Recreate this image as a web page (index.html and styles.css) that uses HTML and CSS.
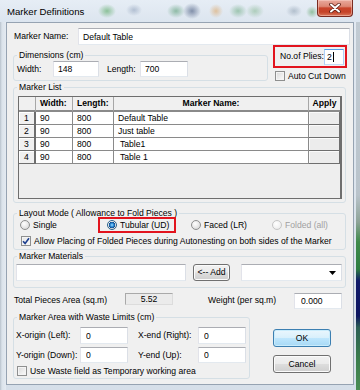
FILE: index.html
```html
<!DOCTYPE html>
<html>
<head>
<meta charset="utf-8">
<link rel="stylesheet" href="styles.css">
</head>
<body>
<div class="window">
  <div class="titlebar">
    <span class="title">Marker Definitions</span>
    <div class="close">
      <svg width="14" height="10" viewBox="0 0 14 10"><path d="M3 1.5 L11 8.5 M11 1.5 L3 8.5" stroke="#5a1d14" stroke-width="3.6" stroke-linecap="round"/><path d="M3 1.5 L11 8.5 M11 1.5 L3 8.5" stroke="#ffffff" stroke-width="2" stroke-linecap="round"/></svg>
    </div>
  </div>
  <div class="client">
    <div class="row-name">
      <span class="lbl-name">Marker Name:</span>
      <input class="tb tb-name" type="text" value="Default Table">
    </div>

    <div class="row-dim">
      <fieldset class="gb gb-dim">
        <legend>Dimensions (cm)</legend>
        <div class="dim-inner">
          <span class="lbl-w">Width:</span>
          <input class="tb tb-w" type="text" value="148">
          <span class="lbl-l">Length:</span>
          <input class="tb tb-l" type="text" value="700">
        </div>
      </fieldset>
      <div class="plies-col">
        <div class="plies">
          <span class="lbl-plies">No.of Plies:</span>
          <div class="tb tb-plies focus">2<span class="caret"></span></div>
        </div>
        <div class="chk-row acd">
          <span class="chk"></span><span>Auto Cut Down</span>
        </div>
      </div>
    </div>

    <fieldset class="gb gb-list">
      <legend>Marker List</legend>
      <div class="list-inner">
        <div class="grid">
          <table>
            <colgroup><col class="c0"><col class="c1"><col class="c2"><col class="c3"><col class="c4"></colgroup>
            <tr class="hdr"><th class="corner"></th><th class="l">Width:</th><th class="l">Length:</th><th>Marker Name:</th><th>Apply</th></tr>
            <tr><th class="rh">1</th><td>90</td><td>800</td><td>Default Table</td><td class="ap"></td></tr>
            <tr><th class="rh">2</th><td>90</td><td>800</td><td>Just table</td><td class="ap"></td></tr>
            <tr><th class="rh">3</th><td>90</td><td>800</td><td class="ind">Table1</td><td class="ap"></td></tr>
            <tr><th class="rh">4</th><td>90</td><td>800</td><td class="ind">Table 1</td><td class="ap"></td></tr>
          </table>
        </div>
      </div>
    </fieldset>

    <fieldset class="gb gb-layout">
      <legend>Layout Mode ( Allowance to Fold Pieces )</legend>
      <div class="layout-inner">
        <div class="radio-row">
          <span class="opt opt-single"><span class="radio"></span><span>Single</span></span>
          <span class="opt opt-tub hl"><span class="radio on"></span><span>Tubular (UD)</span></span>
          <span class="opt opt-faced"><span class="radio"></span><span>Faced (LR)</span></span>
          <span class="opt opt-fold dis"><span class="radio"></span><span>Folded (all)</span></span>
        </div>
        <div class="chk-row allow">
          <span class="chk on"><svg width="8" height="8" viewBox="0 0 8 8"><path d="M1 4.2 L3.1 6.4 L7 1.2" fill="none" stroke="#1d3f8f" stroke-width="1.6"/></svg></span>
          <span>Allow Placing of Folded Pieces during Autonesting on both sides of the Marker</span>
        </div>
      </div>
    </fieldset>

    <fieldset class="gb gb-mat">
      <legend>Marker Materials</legend>
      <div class="mat-inner">
        <input class="tb tb-mat" type="text" value="">
        <div class="btn btn-add">&lt;-- Add</div>
        <div class="tb combo"><svg width="7" height="4" viewBox="0 0 7 4"><path d="M0 0 H7 L3.5 4 Z" fill="#000"/></svg></div>
      </div>
    </fieldset>

    <div class="row-total">
      <span class="lbl-total">Total Pieces Area (sq.m)</span>
      <div class="valbox">5.52</div>
      <span class="lbl-weight">Weight (per sq.m)</span>
      <input class="tb tb-weight" type="text" value="0.000">
    </div>

    <div class="row-bottom">
      <fieldset class="gb gb-area">
        <legend>Marker Area with Waste Limits (cm)</legend>
        <div class="area-inner">
          <div class="area-row r1">
            <span class="lbl-a">X-origin (Left):</span>
            <input class="tb tb-a" type="text" value="0">
            <span class="lbl-b">X-end (Right):</span>
            <input class="tb tb-a" type="text" value="0">
          </div>
          <div class="area-row r2">
            <span class="lbl-a">Y-origin (Down):</span>
            <input class="tb tb-a" type="text" value="0">
            <span class="lbl-b">Y-end (Up):</span>
            <input class="tb tb-a" type="text" value="0">
          </div>
          <div class="chk-row waste">
            <span class="chk"></span><span>Use Waste field as Temporary working area</span>
          </div>
        </div>
      </fieldset>
      <div class="btn-col">
        <div class="btn btn-ok">OK</div>
        <div class="btn btn-cancel">Cancel</div>
      </div>
    </div>
  </div>
</div>
</body>
</html>
```

FILE: styles.css
```css
* { box-sizing: border-box; }
html, body { margin: 0; padding: 0; }
body {
  width: 360px; height: 390px; overflow: hidden;
  font-family: "Liberation Sans", Arial, sans-serif;
  font-size: 8.6px; line-height: 11px; color: #000;
  background: #dce5ee;
}
.window {
  width: 360px; height: 390px;
  display: flex; flex-direction: column;
  padding: 0 6px 5px 6px;
  background:
    linear-gradient(to bottom, #c3ccd4 0, #b9c3cb 50%, #8da397 57%, #3f8a4b 62%, #2d7d41 69%, #101a6a 72%, #0c1560 81%, #2c5f55 84%, #3a7c4c 92%, #4a8c54 100%) right top / 4px 100% no-repeat,
    linear-gradient(to right, #b8c2cc 0, #dbe3eb 2px, #e4eaf1 100%) left top / 6px 100% no-repeat,
    linear-gradient(to bottom, #e2e9f1 0, #d6dfe9 100%);
}
.titlebar {
  height: 22px; flex: none;
  display: flex; align-items: flex-start; justify-content: space-between;
  margin: 0 -6px; padding: 0 7px 0 7px;
  background:
    radial-gradient(ellipse 9px 7px at 107px 11px, rgba(70,160,80,.55), transparent),
    radial-gradient(ellipse 8px 6px at 134px 10px, rgba(120,140,170,.45), transparent),
    radial-gradient(ellipse 9px 7px at 176px 11px, rgba(60,140,90,.5), transparent),
    radial-gradient(ellipse 9px 8px at 192px 11px, rgba(50,70,110,.55), transparent),
    radial-gradient(ellipse 7px 7px at 216px 11px, rgba(220,160,90,.55), transparent),
    radial-gradient(ellipse 9px 7px at 238px 11px, rgba(90,160,110,.5), transparent),
    radial-gradient(ellipse 9px 7px at 255px 11px, rgba(110,170,120,.45), transparent),
    radial-gradient(ellipse 8px 6px at 294px 11px, rgba(120,140,160,.45), transparent),
    radial-gradient(ellipse 6px 6px at 312px 12px, rgba(70,150,80,.5), transparent),
    linear-gradient(to bottom, #e6edf5 0, #dce5ef 100%);
}
.title {
  font-size: 9.6px; line-height: 12px; margin-top: 6px; color: #000;
}
.close {
  width: 36px; height: 17px;
  border: 1px solid #7a2b21; border-top: none;
  border-radius: 0 0 4px 4px;
  background: linear-gradient(to bottom, #e9a99c 0, #dd8774 40%, #c9442b 50%, #c54328 75%, #d9775b 100%);
  box-shadow: inset 0 0 0 1px rgba(255,220,210,.45);
  display: flex; align-items: center; justify-content: center;
}
.client {
  flex: 1;
  background: #f0f0f0;
  border: 1px solid #96a3b2;
  display: flex; flex-direction: column;
}

/* generic controls */
.tb {
  font: inherit; color: #000;
  background: #fff;
  border: 1px solid; border-color: #abadb3 #dbdfe6 #e3e9ef #e2e3ea;
  padding: 0 0 0 4px; margin: 0; outline: none;
}
.gb {
  margin: 0; padding: 0;
  border: 1px solid #d5dfe5; border-radius: 3px;
  min-width: 0;
}
.gb legend {
  padding: 0 2px; margin-left: 3px;
  line-height: 11px; font-size: 8.6px;
}
.chk {
  width: 10px; height: 10px; flex: none;
  border: 1px solid #8e8f8f;
  background: linear-gradient(135deg, #d9d9d9 0, #eeeeee 60%, #fbfbfb 100%);
  box-shadow: inset 0 0 0 1px #f4f4f4;
  display: inline-flex; align-items: center; justify-content: center;
}
.chk.on { background: linear-gradient(135deg, #e4e4e4, #fafafa); }
.chk-row { display: flex; align-items: center; height: 12px; }
.chk-row .chk { margin-right: 3px; }
.radio {
  width: 10px; height: 10px; flex: none;
  border: 1px solid #8e8f8f; border-radius: 50%;
  background: radial-gradient(circle at 40% 35%, #ffffff 0, #e8e8e8 50%, #cfcfcf 100%);
  margin-right: 3px;
}
.radio.on {
  border-color: #2c628b;
  background:
    radial-gradient(circle at 50% 50%, #a9e2ff 0, #3d9ee6 1.3px, #175fa8 2.6px, #0f4a8a 3px, rgba(255,255,255,0) 3.4px),
    radial-gradient(circle at 40% 35%, #ffffff 0, #e8e8e8 50%, #cfcfcf 100%);
}
.btn {
  border: 1px solid #707070; border-radius: 3px;
  background: linear-gradient(to bottom, #f2f2f2 0, #ebebeb 48%, #dddddd 52%, #cfcfcf 100%);
  box-shadow: inset 0 0 0 1px #fbfbfb;
  display: flex; align-items: center; justify-content: center;
}

/* row: marker name */
.row-name {
  display: flex; align-items: center;
  margin-top: 5px; padding-left: 7px; height: 17px;
}
.lbl-name { width: 64px; }
.tb-name { width: 272px; height: 17px; }

/* row: dimensions + plies */
.row-dim { display: flex; padding-left: 6px; height: 36px; }
.gb-dim { width: 255px; height: 31px; margin-top: 5px; }
.dim-inner { display: flex; align-items: center; padding-left: 3px; height: 16px; }
.lbl-w { width: 36px; }
.tb-w { width: 46px; height: 16px; }
.lbl-l { width: 33px; margin-left: 8px; }
.tb-l { width: 48px; height: 16px; }
.plies-col { margin-left: 5px; width: 74px; display: flex; flex-direction: column; }
.plies {
  height: 23px; border: 2px solid #e2141e;
  display: flex; align-items: center; padding-left: 5px;
}
.lbl-plies { width: 44px; }
.tb-plies {
  width: 20px; height: 16px; line-height: 14px; padding-left: 2px;
  border-color: #569de5 #aecff7 #c3dcf7 #aecff7;
  display: flex; align-items: center;
}
.caret { width: 1px; height: 10px; background: #000; margin-left: 1px; }
.acd { margin-top: 3px; margin-left: 2px; height: 10px; }

/* marker list */
.gb-list { width: 333px; height: 121px; margin: 1px 0 0 6px; }
.list-inner { padding: 3px 0 0 4px; }
.grid {
  width: 324px; height: 103px;
  background: #eeeeee;
  border: 1px solid #6e6e6e;
  border-right-width: 2px;
}
.grid table { border-collapse: separate; border-spacing: 0; table-layout: fixed; width: 321px; }
.c0 { width: 17px; } .c1 { width: 37px; } .c2 { width: 41px; } .c3 { width: 195px; } .c4 { width: 31px; }
.grid th, .grid td {
  padding: 0; height: 13px; font-weight: normal; white-space: nowrap; overflow: hidden;
  border-right: 1px solid #8a8a8a; border-bottom: 1px solid #8a8a8a;
}
.grid td { background: #fff; padding-left: 4px; }
.grid td.ind { padding-left: 6px; }
.grid .hdr th {
  height: 15px; background: #f0f0f0; font-weight: bold;
  border-right: 1px solid #a7a7a7; border-bottom: 2px solid #8a8a8a;
}
.grid .hdr th.l { text-align: left; padding-left: 4px; }
.grid th.rh {
  background: #f0f0f0; text-align: center;
  box-shadow: inset 1px 1px 0 #ffffff;
  border-right: 2px solid #6e6e6e; border-bottom: 1px solid #6e6e6e;
}
.grid td.ap {
  background: #ececec; padding: 0;
  box-shadow: inset 1px 1px 0 #fafafa;
  border-right: 1px solid #6e6e6e; border-bottom: 1px solid #6e6e6e;
}
.grid tr.hdr th:last-child { border-right: none; }

/* layout mode */
.gb-layout { width: 333px; height: 42px; margin: 5px 0 0 6px; }
.layout-inner { padding-left: 6px; }
.radio-row { display: flex; align-items: center; height: 12px; }
.opt { display: flex; align-items: center; height: 12px; }
.opt-single { width: 78px; }
.opt-tub { width: 78px; height: 16px; margin: -2px 0; border: 2px solid #e2141e; padding-left: 7px; }
.opt-faced { width: 81px; margin-left: 15px; }
.opt-fold.dis { color: #a0a0a0; }
.opt-fold.dis .radio { border-color: #c5c5c5; background: radial-gradient(circle at 40% 35%, #ffffff 0, #f1f1f1 60%, #e3e3e3 100%); }
.allow { margin-top: 4px; padding-left: 1px; }

/* materials */
.gb-mat { width: 333px; height: 37px; margin: 1px 0 0 6px; }
.mat-inner { display: flex; align-items: center; padding: 2px 0 0 2px; }
.tb-mat { width: 170px; height: 17px; }
.btn-add { width: 37px; height: 17px; margin-left: 7px; }
.combo {
  width: 101px; height: 17px; margin-left: 11px;
  display: flex; align-items: center; justify-content: flex-end; padding-right: 5px;
}

/* totals */
.row-total { display: flex; align-items: center; height: 15px; margin-top: 5px; padding-left: 7px; }
.lbl-total { width: 111px; }
.valbox {
  width: 48px; height: 12px; line-height: 10px; text-align: center;
  background: #ebebeb; border: 1px solid; border-color: #a9a9a9 #dcdcdc #dcdcdc #a9a9a9;
  margin-top: -3px;
}
.lbl-weight { width: 86px; margin-left: 35px; }
.tb-weight { width: 48px; height: 16px; padding-left: 6px; }

/* bottom */
.row-bottom { display: flex; margin-top: 4px; padding-left: 6px; }
.gb-area { width: 237px; height: 67px; }
.area-inner { padding-left: 2px; }
.area-row { display: flex; align-items: center; height: 17px; }
.area-row.r1 { margin-top: 4px; }
.area-row.r2 { margin-top: 3px; height: 16px; }
.lbl-a { width: 64px; }
.lbl-b { width: 60px; margin-left: 10px; }
.tb-a { width: 48px; height: 100%; padding-left: 5px; }
.waste { margin-top: 2px; padding-left: 1px; }
.btn-col { margin-left: 23px; padding-top: 17px; display: flex; flex-direction: column; }
.btn-ok {
  width: 58px; height: 18px;
  border-color: #3c7fb1;
  background: linear-gradient(to bottom, #eaf6fd 0, #d9f0fc 48%, #bee6fd 52%, #a7d9f5 100%);
  box-shadow: inset 0 0 0 1px #c9ecfc;
}
.btn-cancel { width: 58px; height: 18px; margin-top: 8px; }
```
